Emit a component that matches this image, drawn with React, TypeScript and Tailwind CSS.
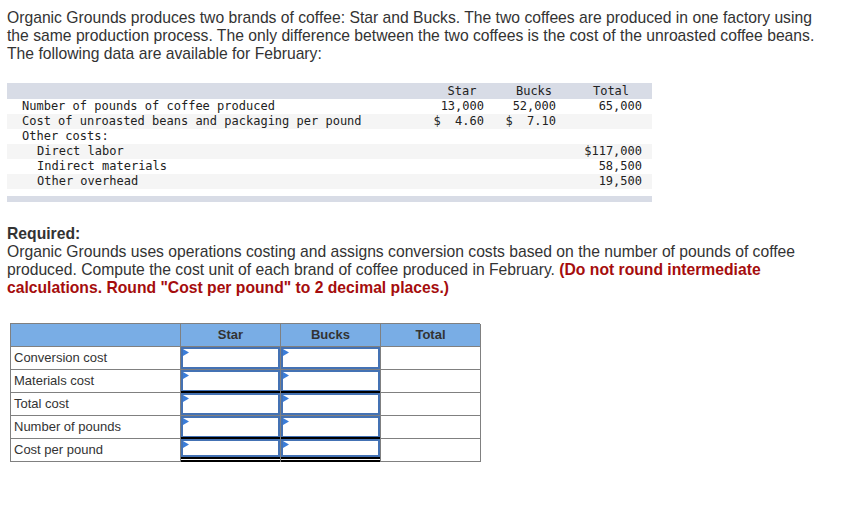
import React from 'react';

const dataRows = [
  { label: 'Number of pounds of coffee produced', star: '13,000', bucks: '52,000', total: '65,000', indent: false },
  { label: 'Cost of unroasted beans and packaging per pound', star: '$  4.60', bucks: '$  7.10', total: '', indent: false },
  { label: 'Other costs:', star: '', bucks: '', total: '', indent: false },
  { label: 'Direct labor', star: '', bucks: '', total: '$117,000', indent: true },
  { label: 'Indirect materials', star: '', bucks: '', total: '58,500', indent: true },
  { label: 'Other overhead', star: '', bucks: '', total: '19,500', indent: true },
];

const answerRows = [
  { label: 'Conversion cost', rule: false },
  { label: 'Materials cost', rule: false },
  { label: 'Total cost', rule: true },
  { label: 'Number of pounds', rule: false },
  { label: 'Cost per pound', rule: true },
];

const InputCell: React.FC<{ rule: boolean; last: boolean }> = ({ rule, last }) => (
  <div className={`border-r border-[#808080] h-[23px] ${last ? '' : 'border-b'}`}>
    <div
      className={`relative border-2 border-[#4472b4] bg-white ${last ? 'h-[18px]' : 'h-full'} ${rule ? 'shadow-[0_-2px_0_0_#000]' : ''}`}
    >
      <svg className="absolute left-0 top-0" width="6" height="8" viewBox="0 0 6 8">
        <polygon points="0,0 6,3.5 0,7" fill="#3b7dd8" />
      </svg>
    </div>
    {last && <div className="h-[5px] border-y-2 border-black bg-white" />}
  </div>
);

const App: React.FC = () => {
  return (
    <div className="w-[844px] h-[511px] bg-white pl-[7px] pt-[9px] text-[#333]" style={{ fontFamily: '"Liberation Sans", Arial, sans-serif' }}>
      <p className="text-[15.7px] leading-[18px] whitespace-nowrap">
        Organic Grounds produces two brands of coffee: Star and Bucks. The two coffees are produced in one factory using
        <br />
        the same production process. The only difference between the two coffees is the cost of the unroasted coffee beans.
        <br />
        The following data are available for February:
      </p>

      {/* Data table */}
      <div className="mt-[20px] w-[645px] text-[12px] text-[#222]" style={{ fontFamily: '"DejaVu Sans Mono", "Liberation Mono", monospace' }}>
        <div className="grid grid-cols-[423px_64px_80px_74px] h-[16px] leading-[16px] bg-[#d8dce6]">
          <div />
          <div className="text-center">Star</div>
          <div className="text-center">Bucks</div>
          <div className="text-center">Total</div>
        </div>
        {dataRows.map((r, i) => (
          <div
            key={r.label}
            className={`grid grid-cols-[423px_64px_80px_74px] h-[15px] leading-[15px] whitespace-pre ${i % 2 === 1 ? 'bg-[#f5f5f5]' : 'bg-white'}`}
          >
            <div className={r.indent ? 'pl-[30px]' : 'pl-[15px]'}>{r.label}</div>
            <div className="text-right pr-[10px]">{r.star}</div>
            <div className="text-right pr-[18px]">{r.bucks}</div>
            <div className="text-right pr-[6px]">{r.total}</div>
          </div>
        ))}
        <div className="mt-[7px] h-[6px] bg-[#d8dce6]" />
      </div>

      {/* Required */}
      <div className="mt-[23px] text-[15.7px] leading-[18px] whitespace-nowrap">
        <p className="font-bold">Required:</p>
        <p>
          Organic Grounds uses operations costing and assigns conversion costs based on the number of pounds of coffee
          <br />
          produced. Compute the cost unit of each brand of coffee produced in February.{' '}
          <span className="font-bold text-[#a50d0d]">
            (Do not round intermediate
            <br />
            calculations. Round "Cost per pound" to 2 decimal places.)
          </span>
        </p>
      </div>

      {/* Answer table */}
      <div className="mt-[26px] ml-[3px] w-[470px] text-[13px]">
        <div className="grid grid-cols-[170px_100px_100px_100px] border-l border-t border-[#808080]">
          <div className="h-[23px] bg-[#79ade5] border-r border-b border-[#808080]" />
          {['Star', 'Bucks', 'Total'].map((h) => (
            <div key={h} className="h-[23px] leading-[22px] bg-[#79ade5] border-r border-b border-[#808080] text-center font-bold">
              {h}
            </div>
          ))}
          {answerRows.map((r, i) => {
            const last = i === answerRows.length - 1;
            return (
              <React.Fragment key={r.label}>
                <div className="h-[23px] leading-[22px] pl-[3px] border-r border-b border-[#808080]">{r.label}</div>
                <InputCell rule={r.rule} last={last} />
                <InputCell rule={r.rule} last={last} />
                <div className="h-[23px] border-r border-b border-[#808080]" />
              </React.Fragment>
            );
          })}
        </div>
      </div>
    </div>
  );
};

export default App;
